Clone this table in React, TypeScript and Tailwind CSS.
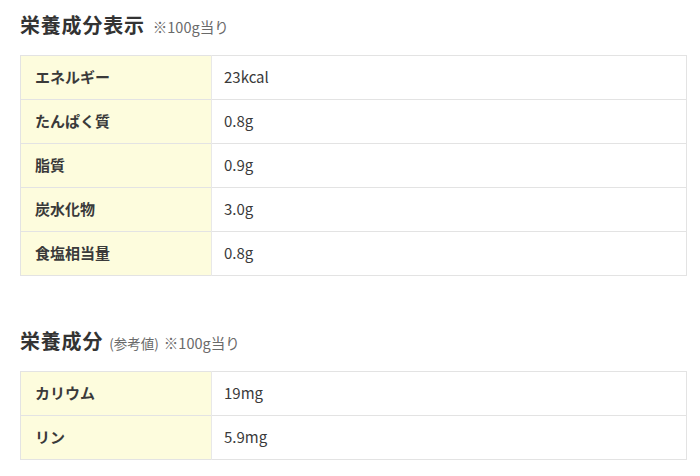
import React from 'react';

type Row = { label: string; value: string };

const display: Row[] = [
  { label: 'エネルギー', value: '23kcal' },
  { label: 'たんぱく質', value: '0.8g' },
  { label: '脂質', value: '0.9g' },
  { label: '炭水化物', value: '3.0g' },
  { label: '食塩相当量', value: '0.8g' },
];

const reference: Row[] = [
  { label: 'カリウム', value: '19mg' },
  { label: 'リン', value: '5.9mg' },
];

function NutritionTable({ rows }: { rows: Row[] }) {
  return (
    <table className="w-[667px] border-collapse border border-[#e3e3e3]">
      <tbody>
        {rows.map((r) => (
          <tr key={r.label} className="h-[44px] border-b border-[#e3e3e3]">
            <td className="w-[191px] border-r border-[#e8e8e8] bg-[#fdfcdd] pl-[14px] text-[15px] font-bold text-[#3a3a3a]">
              {r.label}
            </td>
            <td className="pl-[12px] text-[15px] text-[#3a3a3a]">{r.value}</td>
          </tr>
        ))}
      </tbody>
    </table>
  );
}

export default function App() {
  return (
    <main
      className="min-h-screen bg-white pl-[20px] pt-[10px]"
      style={{ fontFamily: '"Noto Sans CJK JP", "Noto Sans", sans-serif' }}
    >
      {/* 表示 */}
      <h2 className="flex items-baseline gap-[8px] text-[#333]">
        <span className="text-[20px] font-bold tracking-[0.04em]">栄養成分表示</span>
        <span className="text-[14.5px] text-[#6a6a6a]">※100g当り</span>
      </h2>
      <div className="mt-[15px]">
        <NutritionTable rows={display} />
      </div>

      {/* 参考値 */}
      <h2 className="mt-[50px] flex items-baseline gap-[6px] text-[#333]">
        <span className="text-[20px] font-bold tracking-[0.04em]">栄養成分</span>
        <span className="text-[14.5px] text-[#6a6a6a]">
          <span className="mr-[5px] text-[13.5px]">(参考値)</span>※100g当り
        </span>
      </h2>
      <div className="mt-[15px]">
        <NutritionTable rows={reference} />
      </div>
    </main>
  );
}
